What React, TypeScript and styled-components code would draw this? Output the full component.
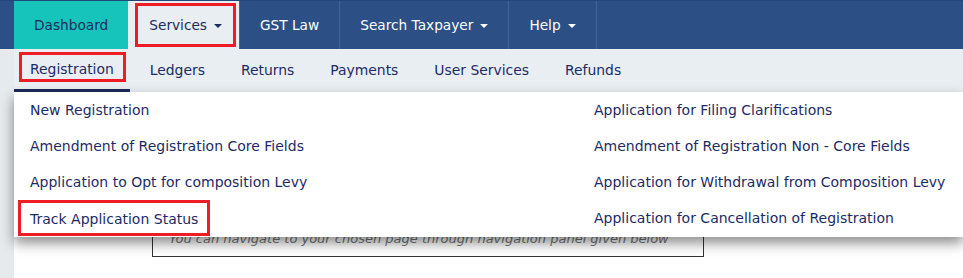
import React from "react"
import styled, { createGlobalStyle, css } from "styled-components"

const GlobalStyle = createGlobalStyle`
  html, body {
    margin: 0;
    padding: 0;
    background: #fff;
  }
  body {
    font-family: "DejaVu Sans", Verdana, sans-serif;
    font-size: 14px;
  }
  * {
    box-sizing: border-box;
  }
`

const colors = {
  navy: "#2c4f85",
  teal: "#17c4bb",
  light: "#e9eef2",
  gutter: "#e6eaed",
  text: "#1c2b66",
  red: "#ee1c25",
}

const Page = styled.div`
  width: 963px;
  height: 278px;
  overflow: hidden;
`

const TopNav = styled.nav`
  display: flex;
  height: 49px;
  padding-left: 14px;
  background: ${colors.navy};
  border-top: 1px solid #24457a;
  font-size: 13.7px;
`

const TopItem = styled.div<{ $variant?: "teal" | "open"; $marked?: boolean }>`
  position: relative;
  display: flex;
  align-items: center;
  gap: 7px;
  padding: 0 20px;
  color: #fff;
  border-right: 1px solid #44649a;
  white-space: nowrap;

  ${p =>
    p.$variant === "teal" &&
    css`
      background: ${colors.teal};
      color: #1b2d5e;
      border-right-color: ${colors.teal};
      padding-right: 19px;
    `}

  ${p =>
    p.$variant === "open" &&
    css`
      background: ${colors.light};
      color: #1b2d5e;
      padding-left: 21px;
      padding-right: 17px;
    `}

  ${p =>
    p.$marked &&
    css`
      &::after {
        content: "";
        position: absolute;
        left: 7px;
        right: 3px;
        top: 2px;
        bottom: 2px;
        border: 3px solid ${colors.red};
      }
    `}
`

const Caret = styled.span<{ $dark?: boolean }>`
  width: 0;
  height: 0;
  margin-top: 1px;
  border-left: 4px solid transparent;
  border-right: 4px solid transparent;
  border-top: 4px solid ${p => (p.$dark ? "#1b2d5e" : "#fff")};
`

const Body = styled.div`
  display: flex;
  height: 229px;
`

const Gutter = styled.div`
  width: 14px;
  flex: none;
  background: ${colors.gutter};
`

const Main = styled.div`
  position: relative;
  flex: 1;
  background: #fff;
`

const SubNav = styled.div`
  display: flex;
  gap: 4px;
  height: 43px;
  background: ${colors.light};
  font-size: 13.9px;
`

const SubItem = styled.div<{ $active?: boolean }>`
  position: relative;
  display: flex;
  align-items: center;
  padding: 0 16px 2px;
  color: ${colors.text};
  white-space: nowrap;

  ${p =>
    p.$active &&
    css`
      border-bottom: 3px solid #1b2a5c;
      padding-bottom: 0;
      &::after {
        content: "";
        position: absolute;
        left: 5px;
        right: 4px;
        top: 3px;
        bottom: 7px;
        border: 3px solid ${colors.red};
      }
    `}
`

const Dropdown = styled.div`
  position: absolute;
  top: 43px;
  left: 0;
  right: 0;
  z-index: 2;
  display: grid;
  grid-template-columns: 564px 1fr;
  grid-auto-flow: column;
  grid-template-rows: repeat(4, 36px);
  padding: 0 0 1px 4px;
  background: #fff;
  box-shadow: 0 6px 12px rgba(0, 0, 0, 0.45);
`

const MenuItem = styled.div<{ $marked?: boolean }>`
  justify-self: start;
  display: flex;
  align-items: center;
  padding: 0 12px;
  color: ${colors.text};
  white-space: nowrap;

  ${p =>
    p.$marked &&
    css`
      outline: 3px solid ${colors.red};
      outline-offset: -3px;
      padding-top: 1px;
    `}
`

const Content = styled.div`
  display: flex;
  justify-content: space-between;
  padding: 0 0 0 138px;
  margin-top: 123px;
`

const Notice = styled.div`
  width: 552px;
  height: 42px;
  display: flex;
  align-items: flex-end;
  padding: 0 16px 10px;
  border: 1px solid #333;
  color: #777;
  font-style: italic;
  font-size: 13px;
  white-space: nowrap;
`

const ProfileLink = styled.div`
  margin-top: 8px;
  margin-right: -4px;
  color: #999;
  white-space: nowrap;
`

const leftItems = [
  "New Registration",
  "Amendment of Registration Core Fields",
  "Application to Opt for composition Levy",
  "Track Application Status",
]

const rightItems = [
  "Application for Filing Clarifications",
  "Amendment of Registration Non - Core Fields",
  "Application for Withdrawal from Composition Levy",
  "Application for Cancellation of Registration",
]

const subItems = ["Registration", "Ledgers", "Returns", "Payments", "User Services", "Refunds"]

export default function App() {
  return (
    <Page>
      <GlobalStyle />
      <TopNav>
        <TopItem $variant="teal">Dashboard</TopItem>
        <TopItem $variant="open" $marked>
          Services <Caret $dark />
        </TopItem>
        <TopItem>GST Law</TopItem>
        <TopItem>
          Search Taxpayer <Caret />
        </TopItem>
        <TopItem>
          Help <Caret />
        </TopItem>
      </TopNav>
      <Body>
        <Gutter />
        <Main>
          <SubNav>
            {subItems.map(item => (
              <SubItem key={item} $active={item === "Registration"}>
                {item}
              </SubItem>
            ))}
          </SubNav>
          <Dropdown>
            {leftItems.map(item => (
              <MenuItem key={item} $marked={item === "Track Application Status"}>
                {item}
              </MenuItem>
            ))}
            {rightItems.map(item => (
              <MenuItem key={item}>{item}</MenuItem>
            ))}
          </Dropdown>
          <Content>
            <Notice>You can navigate to your chosen page through navigation panel given below</Notice>
            <ProfileLink>View Profile</ProfileLink>
          </Content>
        </Main>
      </Body>
    </Page>
  )
}
